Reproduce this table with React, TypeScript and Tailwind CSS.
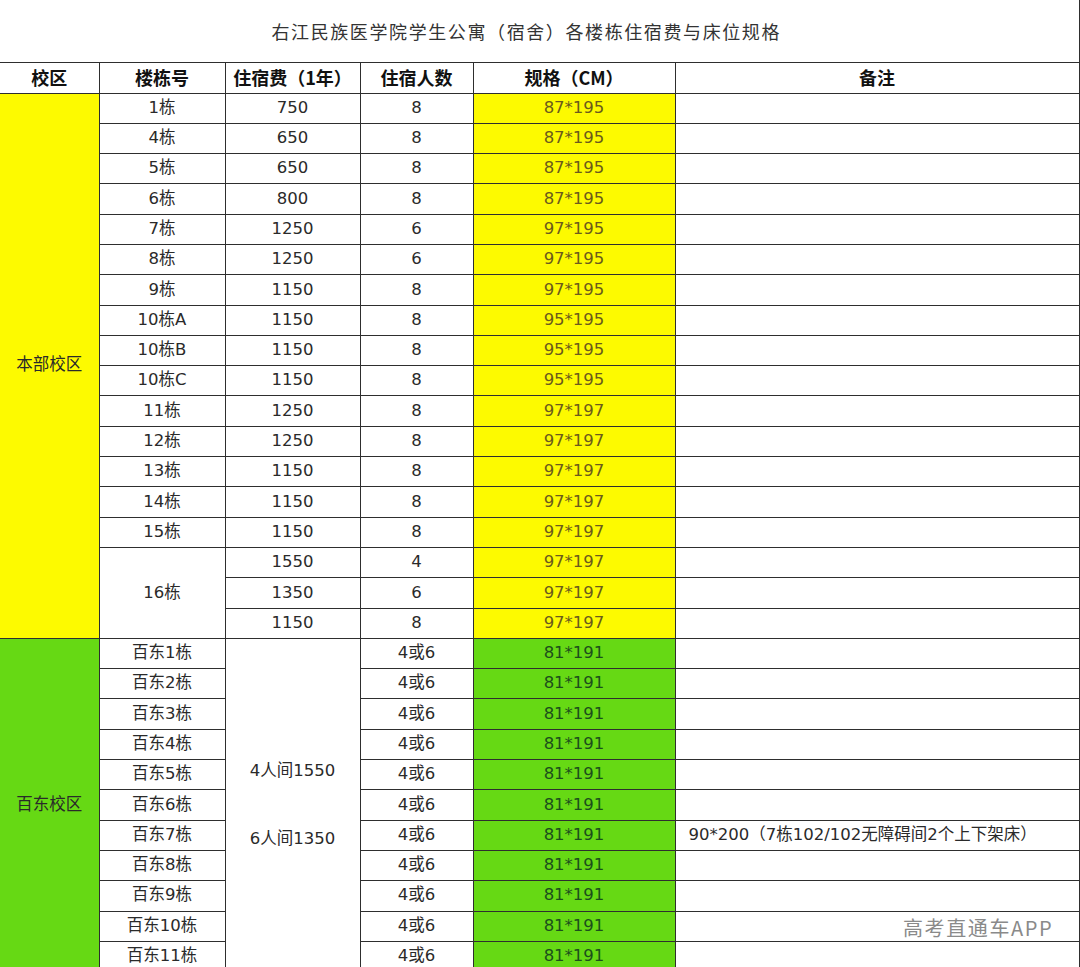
import React from 'react';

type Row = {
  building?: string;
  buildingSpan?: number;
  fee?: string;
  count: string;
  spec: string;
};

const mainRows: Row[] = [
  { building: '1栋', fee: '750', count: '8', spec: '87*195' },
  { building: '4栋', fee: '650', count: '8', spec: '87*195' },
  { building: '5栋', fee: '650', count: '8', spec: '87*195' },
  { building: '6栋', fee: '800', count: '8', spec: '87*195' },
  { building: '7栋', fee: '1250', count: '6', spec: '97*195' },
  { building: '8栋', fee: '1250', count: '6', spec: '97*195' },
  { building: '9栋', fee: '1150', count: '8', spec: '97*195' },
  { building: '10栋A', fee: '1150', count: '8', spec: '95*195' },
  { building: '10栋B', fee: '1150', count: '8', spec: '95*195' },
  { building: '10栋C', fee: '1150', count: '8', spec: '95*195' },
  { building: '11栋', fee: '1250', count: '8', spec: '97*197' },
  { building: '12栋', fee: '1250', count: '8', spec: '97*197' },
  { building: '13栋', fee: '1150', count: '8', spec: '97*197' },
  { building: '14栋', fee: '1150', count: '8', spec: '97*197' },
  { building: '15栋', fee: '1150', count: '8', spec: '97*197' },
  { building: '16栋', buildingSpan: 3, fee: '1550', count: '4', spec: '97*197' },
  { fee: '1350', count: '6', spec: '97*197' },
  { fee: '1150', count: '8', spec: '97*197' },
];

const baidongRows = Array.from({ length: 11 }, (_, i) => ({
  building: `百东${i + 1}栋`,
  count: '4或6',
  spec: '81*191',
  note: i === 6 ? '90*200（7栋102/102无障碍间2个上下架床）' : '',
}));

const cell = 'border border-[#2e2e2e] p-0 text-center align-middle';
const dataFont = { fontFamily: '"DejaVu Sans", "Noto Sans CJK SC", sans-serif' };

export default function App() {
  return (
    <div
      className="relative w-[1080px] h-[967px] overflow-hidden bg-white text-[#2a2a2a]"
      style={{ fontFamily: '"Noto Sans CJK SC", sans-serif' }}
    >
      <table className="w-[1079px] table-fixed border-collapse">
        <colgroup>
          <col className="w-[99px]" />
          <col className="w-[126px]" />
          <col className="w-[135px]" />
          <col className="w-[113px]" />
          <col className="w-[202px]" />
          <col className="w-[404px]" />
        </colgroup>
        <tbody>
          {/* title */}
          <tr className="h-[62px]">
            <td
              colSpan={6}
              className="border-r border-b border-[#2e2e2e] text-center align-middle text-[18px] tracking-[1.6px] text-[#333] pr-[26px] pt-[2px]"
            >
              右江民族医学院学生公寓（宿舍）各楼栋住宿费与床位规格
            </td>
          </tr>
          <tr className="h-[31px] text-[18px] font-bold text-[#111]">
            <td className={`${cell} border-l-0`}>校区</td>
            <td className={cell}>楼栋号</td>
            <td className={cell}>住宿费（1年）</td>
            <td className={cell}>住宿人数</td>
            <td className={cell}>规格（CM）</td>
            <td className={cell}>备注</td>
          </tr>
          {mainRows.map((r, i) => (
            <tr key={`m${i}`} className="h-[30.3px] text-[16.5px]" style={dataFont}>
              {i === 0 && (
                <td rowSpan={18} className={`${cell} border-l-0 bg-[#fdfa00]`}>
                  本部校区
                </td>
              )}
              {r.building && (
                <td rowSpan={r.buildingSpan ?? 1} className={cell}>
                  {r.building}
                </td>
              )}
              <td className={cell}>{r.fee}</td>
              <td className={cell}>{r.count}</td>
              <td className={`${cell} bg-[#fdfa00] text-[#6b5a1c]`}>{r.spec}</td>
              <td className={cell}></td>
            </tr>
          ))}
          {baidongRows.map((r, i) => (
            <tr key={`b${i}`} className="h-[30.3px] text-[16.5px]" style={dataFont}>
              {i === 0 && (
                <td rowSpan={11} className={`${cell} border-l-0 bg-[#66d914]`}>
                  百东校区
                </td>
              )}
              <td className={cell}>{r.building}</td>
              {i === 0 && (
                <td rowSpan={11} className={cell}>
                  <div className="flex flex-col items-center gap-[44px] pt-[1px]">
                    <span>4人间1550</span>
                    <span>6人间1350</span>
                  </div>
                </td>
              )}
              <td className={cell}>{r.count}</td>
              <td className={`${cell} bg-[#66d914] text-[#1c4f1c]`}>{r.spec}</td>
              <td className={`${cell} text-left pl-[13px] whitespace-nowrap`}>{r.note}</td>
            </tr>
          ))}
        </tbody>
      </table>
      {/* watermark */}
      <div className="absolute left-[903px] top-[913px] text-[20px] text-[#8a8a8a] tracking-[1.6px]">
        高考直通车APP
      </div>
    </div>
  );
}
